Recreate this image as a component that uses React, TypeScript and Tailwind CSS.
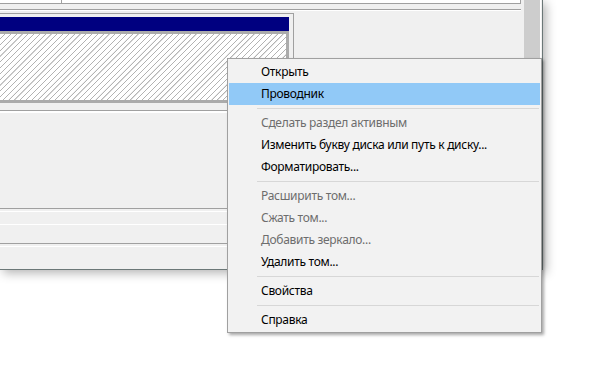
type Item = { label: string; disabled?: boolean; active?: boolean } | "sep";

const items: Item[] = [
  { label: "Открыть" },
  { label: "Проводник", active: true },
  "sep",
  { label: "Сделать раздел активным", disabled: true },
  { label: "Изменить букву диска или путь к диску..." },
  { label: "Форматировать..." },
  "sep",
  { label: "Расширить том...", disabled: true },
  { label: "Сжать том...", disabled: true },
  { label: "Добавить зеркало...", disabled: true },
  { label: "Удалить том..." },
  "sep",
  { label: "Свойства" },
  "sep",
  { label: "Справка" },
];

function ContextMenu() {
  return (
    <div className="absolute left-[227px] top-[58px] w-[315px] border border-[#a0a0a0] bg-[#f2f2f2] px-[1px] pt-[2px] pb-[1px] shadow-[2px_2px_3px_rgba(0,0,0,0.35)]">
      {items.map((item, i) =>
        item === "sep" ? (
          <div key={i} className="flex h-[7px] items-center pl-[28px] pr-[1px]">
            <div className="h-px w-full bg-[#d7d7d7]" />
          </div>
        ) : (
          <div
            key={i}
            className={
              "h-[22px] pl-[32px] text-[12px] leading-[22px] tracking-[-0.3px] " +
              (item.active ? "bg-[#91c9f7] " : "") +
              (item.disabled ? "text-[#6d6d6d]" : "text-black")
            }
          >
            {item.label}
          </div>
        )
      )}
    </div>
  );
}

function DiskPane() {
  return (
    <div className="flex h-[95px] w-[294px] flex-col border-t border-r border-[#a0a0a0] pt-[3px]">
      <div className="h-[14px] w-[289px] bg-[#000080]" />
      <div className="h-[72px] w-[289px] border-r-[3px] border-b-[3px] border-t-[3px] border-[#ababab] bg-[repeating-linear-gradient(135deg,#ffffff_0px,#ffffff_3.1px,#b2b2b2_3.3px,#b2b2b2_3.9px,#ffffff_4.1px)]" />
    </div>
  );
}

export default function App() {
  return (
    <div
      className="relative h-[371px] w-[611px] overflow-hidden bg-white"
      style={{ fontFamily: '"Segoe UI", "Noto Sans", sans-serif' }}
    >
      <div className="flex h-[270px] w-[543px] border-r border-b border-[#6b7777] bg-[#f0f0f0] shadow-[3px_3px_10px_rgba(0,0,0,0.3)]">
        {/* main area */}
        <div className="flex w-[524px] flex-col">
          <div className="flex h-[4px] w-[521px] border-r border-b border-[#a0a0a0] bg-white">
            <div className="h-full w-[62px] border-r border-[#a0a0a0]" />
          </div>
          <div className="h-[5px]" />
          <div className="h-px w-[521px] bg-[#a0a0a0]" />
          <div className="h-px w-[521px] bg-white" />
          <div className="h-[2px]" />
          <DiskPane />
          <div className="h-[2px]" />
          <div className="h-px bg-[#a0a0a0]" />
          <div className="h-[2px] bg-white" />
          <div className="h-[95px]" />
          <div className="h-px bg-[#a0a0a0]" />
          <div className="h-[2px]" />
          <div className="h-px bg-white" />
          <div className="h-[12px]" />
          <div className="h-px bg-white" />
          <div className="h-[18px]" />
          <div className="h-px bg-[#a0a0a0]" />
          <div className="h-[2px]" />
          <div className="h-px bg-white" />
        </div>
        {/* scroll strip */}
        <div className="w-[16px] bg-[#cdcdcd]" />
        <div className="w-px bg-white" />
      </div>
      <ContextMenu />
    </div>
  );
}
